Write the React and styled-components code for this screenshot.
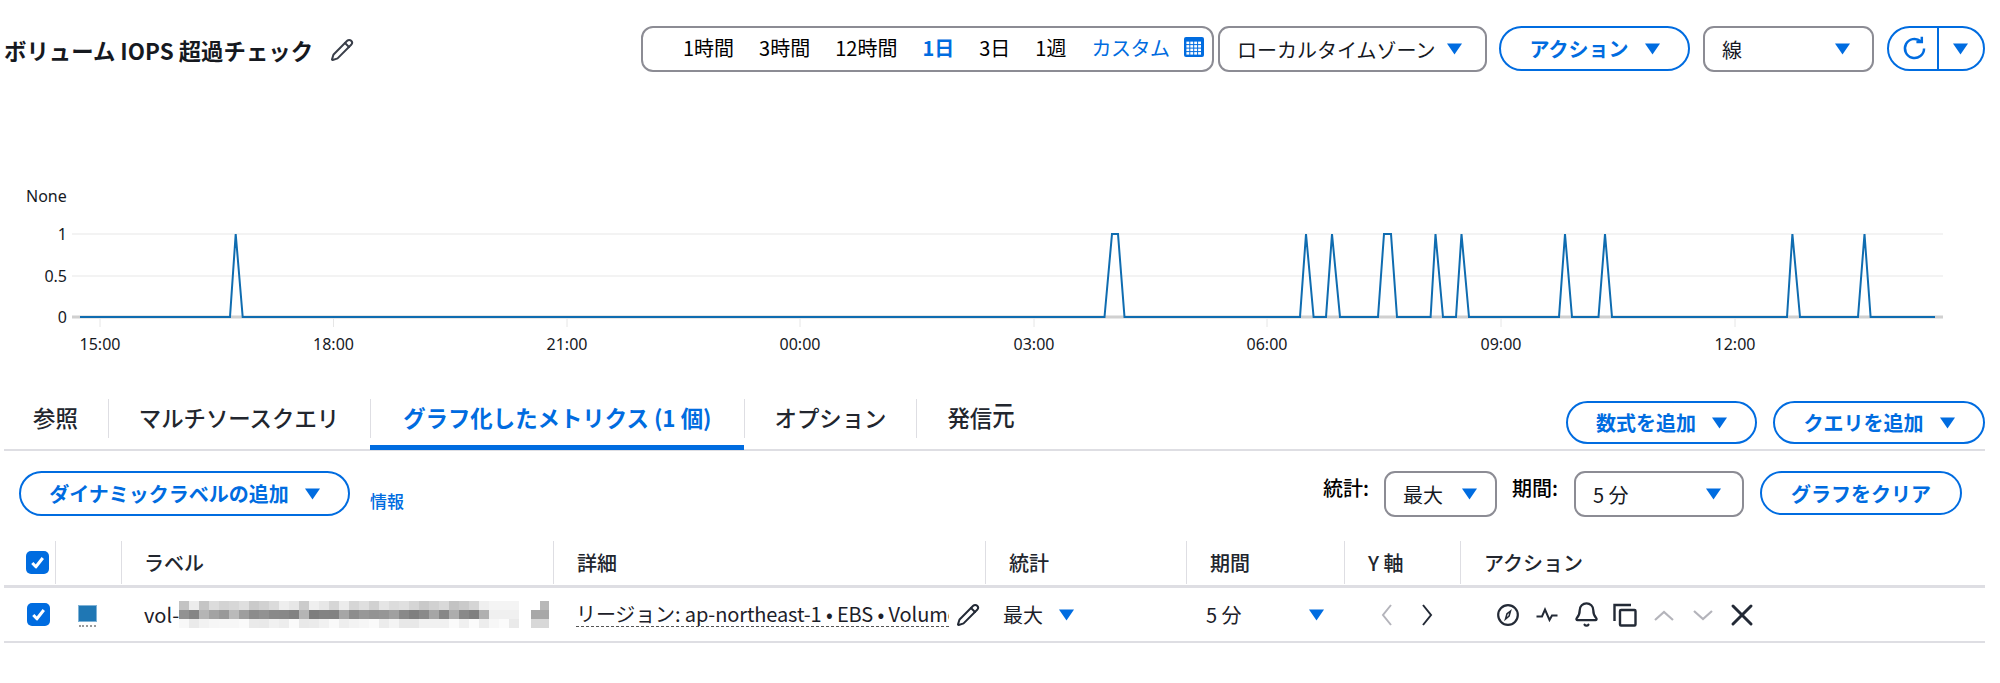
import React from "react";
import styled, { createGlobalStyle } from "styled-components";
import { Pencil, Bell, X } from "lucide-react";

const BLUE = "#006ce0";
const INK = "#16191f";
const LINE = "#dedee3";
const GREY = "#8c8c94";
const FONT = `"Noto Sans CJK JP", "Noto Sans", sans-serif`;
const COLUMNS = "51px 66px 432px 432px 201px 158px 116px 1fr";

const Global = createGlobalStyle`
  html, body { margin: 0; padding: 0; background: #fff; }
  body { font-family: ${FONT}; color: ${INK}; font-size: 20px; }
  * { box-sizing: border-box; }
`;

const Page = styled.div`
  width: 2000px;
  height: 683px;
  overflow: hidden;
  padding: 0 15px 0 4px;
`;

const Header = styled.header`
  display: flex;
  align-items: flex-start;
  height: 73px;
  padding-top: 26px;
`;
const Title = styled.h1`
  display: flex;
  align-items: center;
  gap: 17px;
  margin: 0 auto 0 0;
  height: 48px;
  font-size: 22.4px;
  font-weight: 700;
  white-space: nowrap;
  svg { color: #3a3f4a; }
`;
const Controls = styled.div`
  display: flex;
  align-items: flex-start;
`;
const TimeBox = styled.div`
  display: flex;
  align-items: center;
  gap: 25px;
  width: 573px;
  height: 46px;
  padding: 0 9px 4px 40px;
  border: 2px solid ${GREY};
  border-radius: 12px;
  margin-right: 4px;
  white-space: nowrap;
`;
const TimeItem = styled.span`
  color: ${(p) => (p.$active || p.$link ? BLUE : "#000")};
  font-weight: ${(p) => (p.$active ? 700 : 400)};
  letter-spacing: ${(p) => (p.$link ? "-0.5px" : "0")};
`;
const CalendarWrap = styled.span`
  display: flex;
  margin-left: -10px;
`;

const Select = styled.div`
  display: flex;
  align-items: center;
  justify-content: space-between;
  width: ${(p) => p.$w}px;
  height: 46px;
  padding: ${(p) => p.$pad || "0 22px 0 17px"};
  border: 2px solid ${GREY};
  border-radius: 11px;
  margin-left: ${(p) => p.$ml || 0}px;
  white-space: nowrap;
`;
const Button = styled.button`
  display: inline-flex;
  align-items: center;
  justify-content: center;
  gap: 16px;
  width: ${(p) => p.$w}px;
  height: ${(p) => p.$h || 45}px;
  padding: 0;
  background: #fff;
  border: 2px solid ${BLUE};
  border-radius: 23px;
  color: ${BLUE};
  font-family: ${FONT};
  font-size: 20px;
  font-weight: 700;
  margin-left: ${(p) => p.$ml || 0}px;
  white-space: nowrap;
`;
const SplitButton = styled.div`
  display: flex;
  width: 98px;
  height: 45px;
  margin-left: 13px;
  border: 2px solid ${BLUE};
  border-radius: 23px;
  overflow: hidden;
`;
const SplitPart = styled.span`
  display: flex;
  align-items: center;
  justify-content: center;
  flex: 1;
  padding-left: ${(p) => p.$pl || 0}px;
  color: ${BLUE};
  & + & { border-left: 2px solid ${BLUE}; }
`;

const ChartFrame = styled.div`
  margin: 107px 0 0 -4px;
  height: 200px;
  svg { display: block; }
  text { font-family: "Noto Sans", sans-serif; font-size: 16px; fill: ${INK}; }
`;

const TabBar = styled.div`
  display: flex;
  justify-content: space-between;
  align-items: flex-end;
  height: 71px;
  border-bottom: 2px solid ${LINE};
`;
const Tabs = styled.div`
  display: flex;
  margin-bottom: -1px;
`;
const Tab = styled.div`
  height: 52px;
  padding-top: 1px;
  border-bottom: 5px solid ${(p) => (p.$active ? BLUE : "transparent")};
  color: ${(p) => (p.$active ? BLUE : "#22262e")};
  font-size: 22.4px;
  font-weight: ${(p) => (p.$active ? 700 : 500)};
  white-space: nowrap;
`;
const TabLabel = styled.div`
  display: flex;
  align-items: center;
  height: 39px;
  padding: ${(p) => p.$pad};
  border-left: ${(p) => (p.$first ? "none" : `1px solid ${LINE}`)};
`;
const StretchedGlyph = styled.span`
  display: inline-block;
  transform: scaleY(1.25);
  transform-origin: bottom;
`;
const TabActions = styled.div`
  display: flex;
  gap: 16px;
  margin-bottom: 5px;
`;

const Toolbar = styled.div`
  display: flex;
  align-items: flex-start;
  height: 79px;
  padding: 20px 23px 0 15px;
`;
const InfoLink = styled.span`
  margin: 17px auto 0 20px;
  color: ${BLUE};
  font-size: 17px;
  font-weight: 500;
`;
const FieldLabel = styled.span`
  margin: 2px ${(p) => p.$mr}px 0 ${(p) => p.$ml || 0}px;
  font-size: 20px;
  font-weight: 500;
  color: #000;
`;

const HeadRow = styled.div`
  display: grid;
  grid-template-columns: ${COLUMNS};
  height: 58px;
  padding-top: 11px;
  border-bottom: 3px solid ${LINE};
`;
const HeadCell = styled.div`
  display: flex;
  align-items: center;
  height: 43px;
  padding-left: ${(p) => p.$pl ?? 23}px;
  border-left: ${(p) => (p.$first ? "none" : `1px solid ${LINE}`)};
  font-size: 20px;
  font-weight: 500;
  color: #22262e;
`;
const BodyRow = styled.div`
  display: grid;
  grid-template-columns: ${COLUMNS};
  height: 55px;
  border-bottom: 2px solid ${LINE};
`;
const Cell = styled.div`
  display: flex;
  align-items: center;
  min-width: 0;
  padding-left: ${(p) => p.$pl ?? 23}px;
  white-space: nowrap;
  color: #1c2028;
`;
const Check = styled.span`
  display: flex;
  align-items: center;
  justify-content: center;
  width: 23px;
  height: 23px;
  background: ${BLUE};
  border-radius: 5px;
`;
const Swatch = styled.span`
  position: relative;
  display: block;
  width: 19px;
  height: 17px;
  background: #1f77b4;
  border: 1px solid #7fb2d6;
  margin-top: -2px;
  &::after {
    content: "";
    position: absolute;
    left: 0;
    right: 0;
    bottom: -6px;
    border-bottom: 2px dotted #9a9a9a;
  }
`;
const Dotted = styled.span`
  display: block;
  width: 373px;
  overflow: hidden;
  border-bottom: 1px dashed #555;
  line-height: 24px;
  letter-spacing: -0.12px;
`;
const CaretText = styled.span`
  display: flex;
  align-items: center;
  justify-content: space-between;
  width: ${(p) => p.$w}px;
`;
const IconRow = styled.div`
  display: flex;
  align-items: center;
  gap: ${(p) => p.$gap}px;
  color: #232a36;
`;
const IconBox = styled.span`
  display: flex;
  align-items: center;
  justify-content: center;
  width: 24px;
  height: 24px;
  flex: none;
  margin-left: ${(p) => p.$ml || 0}px;
  color: ${(p) => (p.$muted ? "#b4b4bb" : "#232a36")};
  svg { flex: none; }
`;
const Mosaic = styled.svg`
  display: block;
  flex: none;
`;

const Caret = () => (
  <svg width="15" height="12" viewBox="0 0 15 12" style={{ flex: "none" }}>
    <path d="M0 0.5h15L7.5 11.5z" fill={BLUE} />
  </svg>
);

const Calendar = () => {
  const cells = [];
  for (let r = 0; r < 4; r++)
    for (let c = 0; c < 4; c++)
      cells.push(<rect key={`${r}-${c}`} x={2.4 + c * 3.9} y={4.6 + r * 3.5} width="2.9" height="2.5" fill="#fff" />);
  return (
    <svg width="20" height="20" viewBox="0 0 20 20">
      <rect x="0" y="0" width="20" height="20" rx="2" fill={BLUE} />
      {cells}
    </svg>
  );
};

const CheckMark = () => (
  <svg width="15" height="15" viewBox="0 0 15 15">
    <path d="M2.3 8l3.6 3.8L12.8 3" fill="none" stroke="#fff" strokeWidth="3" strokeLinejoin="round" />
  </svg>
);

const Refresh = () => (
  <svg width="27" height="27" viewBox="0 0 24 24" fill="none" stroke={BLUE} strokeWidth="2.2">
    <path d="M20.5 12a8.5 8.5 0 1 1-3-6.5" />
    <path d="M18.5 1.5v4.8h-4.8" />
  </svg>
);

const Chevron = ({ d, w = 24, h = 24, sw = 2 }) => (
  <svg width={w} height={h} viewBox="0 0 24 24" fill="none" stroke="currentColor" strokeWidth={sw}>
    <path d={d} />
  </svg>
);

const CompassIcon = () => (
  <svg width="24" height="24" viewBox="0 0 24 24" fill="none" stroke="currentColor" strokeWidth="2.2">
    <circle cx="12" cy="12" r="9.8" />
    <path d="M14.5 8L11 10.8 9.5 16l3.6-3z" strokeWidth="1.5" />
  </svg>
);
const PulseIcon = () => (
  <svg width="24" height="24" viewBox="0 0 24 24" fill="none" stroke="currentColor" strokeWidth="2">
    <path d="M1.5 13.5H7L10 6.5 14.5 17 17 12.5H22.5" />
  </svg>
);
const CopyIcon = () => (
  <svg width="24" height="24" viewBox="0 0 24 24" fill="none" stroke="currentColor" strokeWidth="2.4">
    <path d="M1.5 18V2H18" />
    <rect x="7" y="7" width="15.5" height="15.5" rx="1" />
  </svg>
);

const toX = [
  [230, 235.7, 235.7, 242.7],
  [1104.5, 1112, 1118, 1124.5],
  [1300, 1306, 1306, 1313.6],
  [1326, 1332, 1332, 1340],
  [1378, 1384, 1391, 1397],
  [1430.6, 1435.5, 1435.5, 1443],
  [1456, 1461.5, 1461.5, 1469],
  [1559, 1565, 1565, 1572],
  [1598.5, 1605, 1605, 1612],
  [1787, 1792.4, 1792.4, 1800],
  [1858, 1864.5, 1864.5, 1870.6],
];
const Y1 = 234;
const Y0 = 317;
const linePoints = [
  `80,${Y0}`,
  ...toX.flatMap(([a, b, c, d]) => [`${a},${Y0}`, `${b},${Y1}`, `${c},${Y1}`, `${d},${Y0}`]),
  `1935,${Y0}`,
].join(" ");
const ticks = [
  [100, "15:00"],
  [333.5, "18:00"],
  [567, "21:00"],
  [800, "00:00"],
  [1034, "03:00"],
  [1267, "06:00"],
  [1501, "09:00"],
  [1735, "12:00"],
];

const Chart = () => (
  <svg width="2000" height="200" viewBox="0 180 2000 200">
    <text x="26" y="202">None</text>
    <text x="67" y="240" textAnchor="end">1</text>
    <text x="67" y="282" textAnchor="end">0.5</text>
    <text x="67" y="323" textAnchor="end">0</text>
    <line x1="72" x2="1943" y1={Y1} y2={Y1} stroke="#efefef" strokeWidth="1.5" />
    <line x1="72" x2="1943" y1="276" y2="276" stroke="#efefef" strokeWidth="1.5" />
    <line x1="72" x2="1943" y1={Y0} y2={Y0} stroke="#d0d0d0" strokeWidth="3" />
    {ticks.map(([x, label]) => (
      <g key={label}>
        <line x1={x} x2={x} y1="318" y2="327" stroke="#e6e6e6" />
        <text x={x} y="350" textAnchor="middle">{label}</text>
      </g>
    ))}
    <polyline points={linePoints} fill="none" stroke="#0f6cb0" strokeWidth="2" />
  </svg>
);

const seed = (n) => {
  const v = Math.sin(n * 12.9898) * 43758.5453;
  return v - Math.floor(v);
};
const MosaicBlur = () => {
  const rects = [];
  const cell = 10;
  for (let i = 0; i < 34; i++) {
    const x = i * cell;
    const faded = i > 30;
    const top = (195 + seed(i) * 45) | 0;
    const mid = (125 + seed(i + 50) * 70) | 0;
    const low = (232 + seed(i + 90) * 20) | 0;
    const midValue = faded ? 240 : mid;
    const topValue = faded ? 244 : top;
    rects.push(<rect key={`a${i}`} x={x} y="0" width={cell} height="9" fill={`rgb(${topValue},${topValue},${topValue})`} />);
    rects.push(<rect key={`b${i}`} x={x} y="9" width={cell} height="9" fill={`rgb(${midValue},${midValue},${midValue})`} />);
    rects.push(<rect key={`c${i}`} x={x} y="18" width={cell} height="9" fill={`rgb(${low},${low},${low})`} />);
  }
  return (
    <Mosaic width="370" height="27" viewBox="0 0 370 27">
      {rects}
      <rect x="361" y="0" width="9" height="9" fill="#b8b8b8" />
      <rect x="352" y="9" width="18" height="9" fill="#a8a8a8" />
      <rect x="352" y="18" width="18" height="9" fill="#d8d8d8" />
    </Mosaic>
  );
};

const tabs = [
  { key: "ref", label: "参照", pad: "0 30px 4px 29px", first: true },
  { key: "multi", label: "マルチソースクエリ", pad: "0 31px 4px 30px" },
  { key: "graph", label: "グラフ化したメトリクス (1 個)", pad: "0 32px 4px 32px", active: true },
  { key: "opt", label: "オプション", pad: "0 30px 4px 30px" },
  { key: "src", label: <>発信<StretchedGlyph>元</StretchedGlyph></>, pad: "0 29px 4px 30px" },
];

export default function App() {
  return (
    <Page>
      <Global />
      <Header>
        <Title>
          ボリューム IOPS 超過チェック
          <Pencil size={24} strokeWidth={2} />
        </Title>
        <Controls>
          <TimeBox>
            <TimeItem>1時間</TimeItem>
            <TimeItem>3時間</TimeItem>
            <TimeItem>12時間</TimeItem>
            <TimeItem $active>1日</TimeItem>
            <TimeItem>3日</TimeItem>
            <TimeItem>1週</TimeItem>
            <TimeItem $link>カスタム</TimeItem>
            <CalendarWrap><Calendar /></CalendarWrap>
          </TimeBox>
          <Select $w={269} $pad="0 23px 0 17px">
            ローカルタイムゾーン
            <Caret />
          </Select>
          <Button $w={191} $ml={12}>
            アクション
            <Caret />
          </Button>
          <Select $w={171} $ml={13}>
            線
            <Caret />
          </Select>
          <SplitButton>
            <SplitPart $pl={3}><Refresh /></SplitPart>
            <SplitPart><Caret /></SplitPart>
          </SplitButton>
        </Controls>
      </Header>

      <ChartFrame>
        <Chart />
      </ChartFrame>

      <TabBar>
        <Tabs>
          {tabs.map((t) => (
            <Tab key={t.key} $active={t.active}>
              <TabLabel $pad={t.pad} $first={t.first}>{t.label}</TabLabel>
            </Tab>
          ))}
        </Tabs>
        <TabActions>
          <Button $w={191} $h={43}>
            数式を追加
            <Caret />
          </Button>
          <Button $w={212} $h={43}>
            クエリを追加
            <Caret />
          </Button>
        </TabActions>
      </TabBar>

      <Toolbar>
        <Button $w={331} $h={45}>
          ダイナミックラベルの追加
          <Caret />
        </Button>
        <InfoLink>情報</InfoLink>
        <FieldLabel $mr={15}>統計:</FieldLabel>
        <Select $w={113} $pad="0 18px 0 17px">
          最大
          <Caret />
        </Select>
        <FieldLabel $ml={15} $mr={16}>期間:</FieldLabel>
        <Select $w={170} $pad="0 21px 0 17px">
          5 分
          <Caret />
        </Select>
        <Button $w={202} $h={44} $ml={16}>グラフをクリア</Button>
      </Toolbar>

      <HeadRow>
        <HeadCell $first $pl={22}><Check><CheckMark /></Check></HeadCell>
        <HeadCell />
        <HeadCell $pl={22}>ラベル</HeadCell>
        <HeadCell>詳細</HeadCell>
        <HeadCell>統計</HeadCell>
        <HeadCell>期間</HeadCell>
        <HeadCell>Y 軸</HeadCell>
        <HeadCell>アクション</HeadCell>
      </HeadRow>

      <BodyRow>
        <Cell $pl={23}><Check><CheckMark /></Check></Cell>
        <Cell $pl={23}><Swatch /></Cell>
        <Cell>vol-<MosaicBlur /></Cell>
        <Cell>
          <Dotted>リージョン: ap-northeast-1 • EBS • Volume</Dotted>
          <IconBox $ml={7}><Pencil size={24} strokeWidth={2} /></IconBox>
        </Cell>
        <Cell $pl={18}>
          <CaretText $w={71}>最大<Caret /></CaretText>
        </Cell>
        <Cell $pl={20}>
          <CaretText $w={118}>5 分<Caret /></CaretText>
        </Cell>
        <Cell $pl={31}>
          <IconRow $gap={16}>
            <IconBox $muted><Chevron d="M16 2L8 12l8 10" /></IconBox>
            <IconBox><Chevron d="M8 2l8 10-8 10" /></IconBox>
          </IconRow>
        </Cell>
        <Cell $pl={36}>
          <IconRow $gap={15}>
            <IconBox><CompassIcon /></IconBox>
            <IconBox><PulseIcon /></IconBox>
            <IconBox><Bell size={27} strokeWidth={2} /></IconBox>
            <IconBox><CopyIcon /></IconBox>
            <IconBox $muted><Chevron d="M3 17l9-8 9 8" sw={2.2} /></IconBox>
            <IconBox $muted><Chevron d="M3 8l9 8 9-8" sw={2.2} /></IconBox>
            <IconBox><X size={36} strokeWidth={2} /></IconBox>
          </IconRow>
        </Cell>
      </BodyRow>
    </Page>
  );
}
